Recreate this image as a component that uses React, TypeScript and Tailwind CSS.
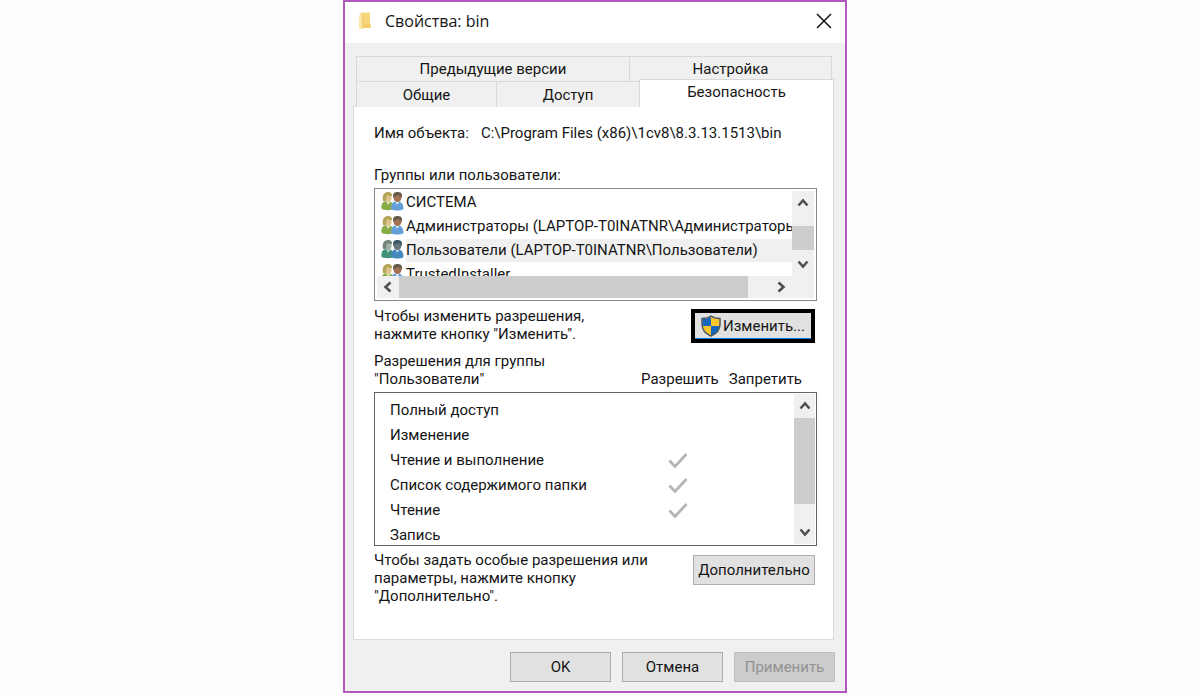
import React from 'react';

const users = [
  { name: 'СИСТЕМА', selected: false },
  { name: 'Администраторы (LAPTOP-T0INATNR\\Администраторы)', selected: false },
  { name: 'Пользователи (LAPTOP-T0INATNR\\Пользователи)', selected: true },
  { name: 'TrustedInstaller', selected: false },
];

const permissions = [
  { name: 'Полный доступ', allow: false },
  { name: 'Изменение', allow: false },
  { name: 'Чтение и выполнение', allow: true },
  { name: 'Список содержимого папки', allow: true },
  { name: 'Чтение', allow: true },
  { name: 'Запись', allow: false },
];

const FolderIcon = () => (
  <svg width="14" height="18" viewBox="0 0 14 18" aria-hidden="true">
    <path d="M2 1.500 5 .5h7v13l1 1V16H6l-4 1-1-1z" fill="#f6d77c" />
    <path d="M1.500 1.500 4 3v14.500L1 16z" fill="#fae6a6" />
    <path d="M4 3.500 6 2v10l-2 5z" fill="#f3cf74" />
    <path d="M6 12h6.500v3.500H5z" fill="#f3cc68" />
  </svg>
);

const UsersIcon = ({ selected }: { selected: boolean }) => (
  <svg className="shrink-0" width="23" height="20" viewBox="0 0 23 20" aria-hidden="true">
    <path d="M.5 18c-.5-5 1-8 5.500-8 4 0 7 2 7 8-3 1.500-9 1.500-12.500 0z" fill={selected ? '#3f9277' : '#86ad45'} />
    <path d="m5 10 2 4 3-4z" fill={selected ? '#b5d4cd' : '#e3e5bd'} />
    <ellipse cx="7" cy="6.500" rx="3.500" ry="4.500" fill={selected ? '#9eb1a4' : '#dcc48c'} />
    <path d="M2 10C1 5 2.500 1 7 1c3 0 4.500 2 4 4-3 0-4-1-5-1-1 2-.5 4-1.500 6z" fill={selected ? '#71857c' : '#b2a459'} />
    <path d="M10 18c0-5 2-8 6-8s6.500 3 6.500 8c-3 2-9 2-12.500 0z" fill={selected ? '#4689bd' : '#659fd8'} />
    <path d="m14 10 2 4 3-4z" fill={selected ? '#bad5e7' : '#dce9f4'} />
    <ellipse cx="16.500" cy="6.500" rx="4" ry="4.500" fill={selected ? '#66767b' : '#a0704f'} />
    <path d="M12.500 7c-1-4 0-6 4-6s5 2 4.500 6L19 4.500h-4z" fill={selected ? '#3e5967' : '#66584b'} />
  </svg>
);

const ShieldIcon = () => (
  <svg className="shrink-0" width="20" height="22" viewBox="0 0 20 22" aria-hidden="true">
    <path d="M10 2v9H1.500V4C5 4 8 3 10 2zM18.500 11c-.5 4.500-4 8-8.500 10V11z" fill="#1766bd" />
    <path d="M10 2c2 1 5 2 8.500 2v7H10zM1.500 11H10v10C5 19 2 15.500 1.500 11z" fill="#fcc62f" />
    <path d="M10 1c2 1.500 5 2.500 9 2.500V9c0 6-4 10-9 12-5-2-9-6-9-12V3.500C5 3.500 8 2.500 10 1z" fill="none" stroke="#4e5960" strokeWidth="1.500" />
  </svg>
);

const CheckMark = () => (
  <svg className="mx-auto" width="20" height="16" viewBox="0 0 20 16" role="img" aria-label="Разрешить">
    <path d="m1.500 8.500 5.500 6L18.500 2" fill="none" stroke="#b5b5b5" strokeWidth="2.800" />
  </svg>
);

const arrows = {
  up: 'm1.500 8.500 4.500-5 4.500 5',
  down: 'm1.500 3.500 4.500 5 4.500-5',
  left: 'm8.500 1.500-5 4.500 5 4.500',
  right: 'm3.500 1.500 5 4.500-5 4.500',
};

const labels = { up: 'Вверх', down: 'Вниз', left: 'Влево', right: 'Вправо' };

const ScrollButton = ({ dir }: { dir: keyof typeof arrows }) => (
  <button type="button" aria-label={labels[dir]} className="flex h-6 w-[22px] shrink-0 items-center justify-center">
    <svg width="12" height="12" viewBox="0 0 12 12">
      <path d={arrows[dir]} fill="none" stroke="#505050" strokeWidth="2.600" />
    </svg>
  </button>
);

const App = () => {
  const tab = 'flex items-center justify-center border-[#d9d9d9] bg-[#f0f0f0]';
  const button = 'flex items-center justify-center border border-[#adadad] bg-[#e1e1e1]';

  return (
    <main className="flex min-h-screen justify-center bg-[#fefefe] pr-2.5 font-[Roboto,'Liberation_Sans',sans-serif] text-[15px] leading-[18px] text-[#151515]">
      <section className="flex w-full max-w-[504px] flex-col border-2 border-[#b05abb] bg-[#f0f0f0]">
        <header className="flex h-[41px] items-center bg-white pr-[11px] pb-[3px] pl-[13px]">
          <FolderIcon />
          <h1 className="ml-[13px] grow font-['Open_Sans','Noto_Sans',sans-serif] text-base">Свойства: bin</h1>
          <button type="button" aria-label="Закрыть" className="flex size-5 items-center justify-center">
            <svg width="16" height="16" viewBox="0 0 16 16">
              <path d="m1 1 14 14M15 1 1 15" stroke="#111" strokeWidth="1.500" />
            </svg>
          </button>
        </header>

        <div className="pt-[13px] pr-[11px] pl-2">
          <nav className="pl-[3px]">
            <div className="mr-0.5 flex h-[25px]">
              <button type="button" className={`${tab} w-[273px] border-t border-l`}>Предыдущие версии</button>
              <button type="button" className={`${tab} grow border-x border-t`}>Настройка</button>
            </div>
            <div className="-mt-0.5 flex h-7 items-end">
              <button type="button" className={`${tab} h-[26px] w-[140px] border-t border-l`}>Общие</button>
              <button type="button" className={`${tab} h-[26px] w-[143px] border-t border-l`}>Доступ</button>
              <button type="button" className="relative flex h-7 grow items-center justify-center border-x border-t border-[#d9d9d9] bg-white pb-1">
                Безопасность
              </button>
            </div>
          </nav>

          <div className="-mt-px border border-t-0 border-[#d9d9d9] bg-white">
            <div className="mr-[193px] border-t border-[#d9d9d9]" />
            <div className="pt-[17px] pr-4 pb-[34px] pl-5">
              <p className="flex gap-3">
                <span>Имя объекта:</span>
                <span>C:\Program Files (x86)\1cv8\8.3.13.1513\bin</span>
              </p>

              <h2 className="mt-6 mb-1">Группы или пользователи:</h2>
              <div className="border border-[#828790] p-0.5">
                <div className="flex h-[85px]">
                  <ul className="min-w-0 grow overflow-hidden pl-1">
                    {users.map((user) => (
                      <li key={user.name} className="flex h-6 items-start gap-0.5 whitespace-nowrap">
                        <UsersIcon selected={user.selected} />
                        <span className={user.selected ? 'grow bg-[#f0f0f0] leading-[23px]' : 'leading-[23px]'}>{user.name}</span>
                      </li>
                    ))}
                  </ul>
                  <div className="flex w-[22px] shrink-0 flex-col items-center justify-between bg-[#f0f0f0]">
                    <ScrollButton dir="up" />
                    <div className="mt-2 h-6 w-full bg-[#cdcdcd]" />
                    <ScrollButton dir="down" />
                  </div>
                </div>
                <div className="flex h-[22px] items-center bg-[#f0f0f0] pr-[22px]">
                  <ScrollButton dir="left" />
                  <div className="mr-[22px] h-full grow bg-[#cdcdcd]" />
                  <ScrollButton dir="right" />
                </div>
              </div>

              <div className="mt-1.5 flex justify-between">
                <p>
                  Чтобы изменить разрешения,
                  <br />
                  нажмите кнопку "Изменить".
                </p>
                <button type="button" className="mt-0.5 mr-0.5 flex h-[34px] w-[124px] items-center justify-center gap-0.5 border-4 border-black bg-[#e1e1e1] shadow-[inset_0_-1px_#0078d7]">
                  <ShieldIcon />
                  Изменить...
                </button>
              </div>

              <div className="mt-[9px] mb-1 flex items-end pr-[15px]">
                <h2 className="grow">
                  Разрешения для группы
                  <br />
                  "Пользователи"
                </h2>
                <span className="mr-2.5">Разрешить</span>
                <span>Запретить</span>
              </div>
              <div className="flex h-[154px] border border-[#646464] p-px">
                <div className="grow overflow-hidden pt-[3px] pl-3.5">
                  <table className="w-full">
                    <tbody>
                      {permissions.map((item) => (
                        <tr key={item.name} className="h-[25px]">
                          <th scope="row" className="text-left font-normal">{item.name}</th>
                          <td className="w-20">{item.allow && <CheckMark />}</td>
                          <td className="w-[76px]" />
                        </tr>
                      ))}
                    </tbody>
                  </table>
                </div>
                <div className="flex w-[21px] shrink-0 flex-col items-center bg-[#f0f0f0]">
                  <ScrollButton dir="up" />
                  <div className="mb-auto h-[86px] w-full bg-[#cdcdcd]" />
                  <ScrollButton dir="down" />
                </div>
              </div>

              <div className="mt-[5px] flex justify-between">
                <p>
                  Чтобы задать особые разрешения или
                  <br />
                  параметры, нажмите кнопку
                  <br />
                  "Дополнительно".
                </p>
                <button type="button" className={`${button} mt-1 mr-0.5 h-[30px] w-[122px]`}>Дополнительно</button>
              </div>
            </div>
          </div>
        </div>

        <footer className="flex justify-end gap-[11px] pt-3 pr-2.5 pb-[9px]">
          <button type="button" className={`${button} h-[30px] w-[101px]`}>OK</button>
          <button type="button" className={`${button} h-[30px] w-[101px]`}>Отмена</button>
          <button type="button" disabled className="h-[30px] w-[101px] border border-[#bfbfbf] bg-[#cccccc] text-[#929292]">
            Применить
          </button>
        </footer>
      </section>
    </main>
  );
};

export default App;
